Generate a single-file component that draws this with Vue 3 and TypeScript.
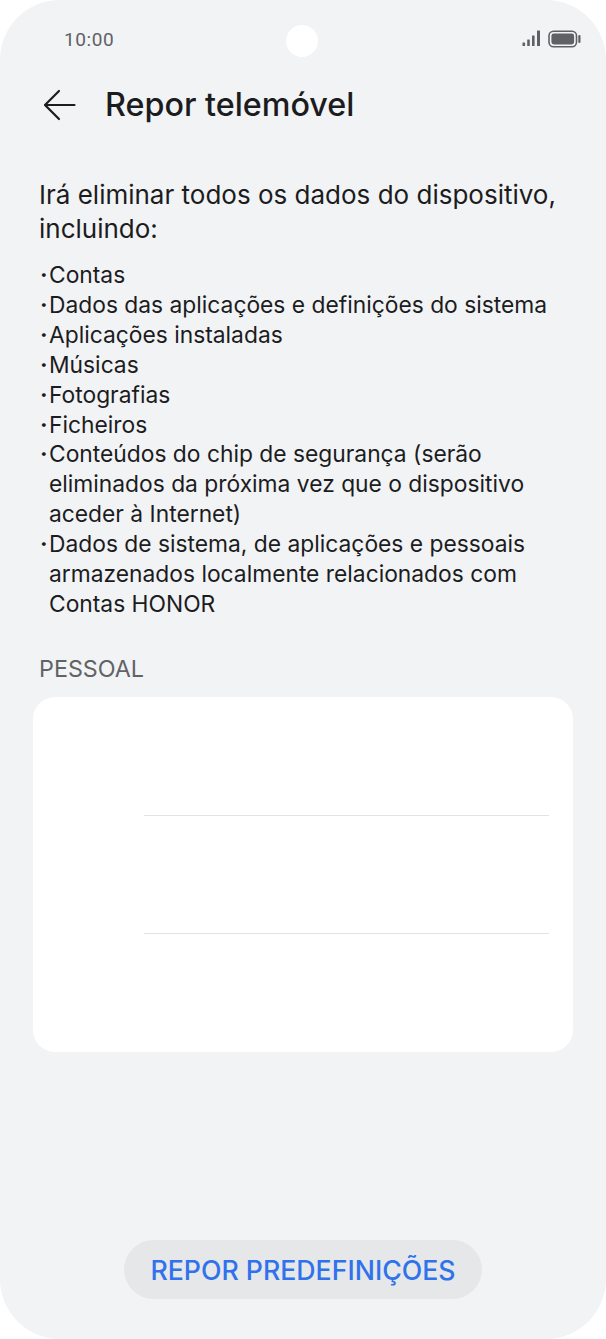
<script setup lang="ts">
const items: string[] = [
  'Contas',
  'Dados das aplicações e definições do sistema',
  'Aplicações instaladas',
  'Músicas',
  'Fotografias',
  'Ficheiros',
  'Conteúdos do chip de segurança (serão eliminados da próxima vez que o dispositivo aceder à Internet)',
  'Dados de sistema, de aplicações e pessoais armazenados localmente relacionados com Contas HONOR',
]
</script>

<template>
  <div class="phone">
    <div class="status">
      <span class="time">10:00</span>
      <span class="camera"></span>
      <div class="status-icons">
        <svg width="20" height="18" viewBox="0 0 20 18" fill="#5f6164">
          <rect x="0.5" y="12.5" width="2.6" height="3.5" rx="0.5" />
          <rect x="5.2" y="9.5" width="2.6" height="6.5" rx="0.5" />
          <rect x="10" y="5.5" width="2.6" height="10.5" rx="0.5" />
          <rect x="15" y="0.5" width="3" height="15.5" rx="0.5" />
        </svg>
        <svg width="34" height="18" viewBox="0 0 34 18">
          <rect x="1" y="1.2" width="27.5" height="15.6" rx="4.5" fill="none" stroke="#5f6164" stroke-width="1.6" />
          <rect x="3.4" y="3.5" width="22.7" height="11" rx="2.4" fill="#5f6164" />
          <rect x="30.3" y="5" width="2.2" height="8" rx="1.1" fill="#5f6164" />
        </svg>
      </div>
    </div>

    <header class="title-bar">
      <svg class="back" width="34" height="32" viewBox="0 0 34 32" fill="none" stroke="#1c1c1e" stroke-width="2.2" stroke-linecap="round" stroke-linejoin="round">
        <path d="M16 2 2 16l14 14" />
        <path d="M2.5 16H31.5" />
      </svg>
      <h1>Repor telemóvel</h1>
    </header>

    <p class="intro">Irá eliminar todos os dados do dispositivo, incluindo:</p>

    <ul class="list">
      <li v-for="item in items" :key="item"><span class="dot">·</span><span>{{ item }}</span></li>
    </ul>

    <div class="section">PESSOAL</div>

    <div class="card">
      <div class="row"></div>
      <div class="row"></div>
      <div class="row"></div>
    </div>

    <div class="spacer"></div>

    <div class="actions">
      <button class="reset" type="button">REPOR PREDEFINIÇÕES</button>
    </div>
  </div>
</template>

<style>
html, body { margin: 0; background: #fff; }
</style>

<style scoped>
.phone {
  width: 606px;
  height: 1339px;
  box-sizing: border-box;
  background: #f1f3f5;
  border-radius: 60px;
  display: flex;
  flex-direction: column;
  font-family: Inter, sans-serif;
  color: #1c1c1e;
  position: relative;
  overflow: hidden;
}
.status {
  height: 78px;
  padding: 0 24px 0 64px;
  display: flex;
  justify-content: space-between;
  align-items: center;
  flex: none;
}
.time {
  font-family: Roboto, sans-serif;
  font-size: 19px;
  letter-spacing: 0.6px;
  color: #5f6164;
}
.camera {
  position: absolute;
  left: 286px;
  top: 25px;
  width: 32px;
  height: 32px;
  border-radius: 50%;
  background: #fff;
}
.status-icons {
  display: flex;
  align-items: center;
  gap: 6px;
}
.title-bar {
  display: flex;
  align-items: center;
  gap: 28px;
  padding-left: 43px;
  height: 54px;
  flex: none;
}
h1 {
  margin: 0;
  font-size: 32.3px;
  font-weight: 500;
  line-height: 54px;
}
.intro {
  margin: 46px 40px 0 39px;
  font-size: 26px;
  line-height: 34px;
}
.list {
  list-style: none;
  margin: 14px 40px 0;
  padding: 0;
  font-size: 22.8px;
  line-height: 29.9px;
}
.list li {
  display: flex;
}
.dot {
  flex: none;
  width: 9px;
  font-weight: 700;
}
.section {
  margin: 35px 40px 0 39px;
  font-size: 23.3px;
  line-height: 30px;
  color: #616366;
}
.card {
  margin: 13px 33px 0;
  height: 355px;
  background: #fff;
  border-radius: 22px;
  display: flex;
  flex-direction: column;
  flex: none;
}
.row {
  height: 118.5px;
  margin-left: 111px;
  margin-right: 24px;
  border-bottom: 1px solid #e2e3e5;
  box-sizing: border-box;
}
.row:first-child { height: 119px; }
.row:last-child { border-bottom: 0; }
.spacer { flex: 1; }
.actions {
  display: flex;
  justify-content: center;
  padding-bottom: 40px;
}
.reset {
  width: 358px;
  height: 59px;
  border: 0;
  border-radius: 30px;
  background: #e6e7e9;
  color: #2f72ec;
  font-family: Inter, sans-serif;
  font-size: 26.7px;
  font-weight: 500;
  padding: 0;
}
</style>
